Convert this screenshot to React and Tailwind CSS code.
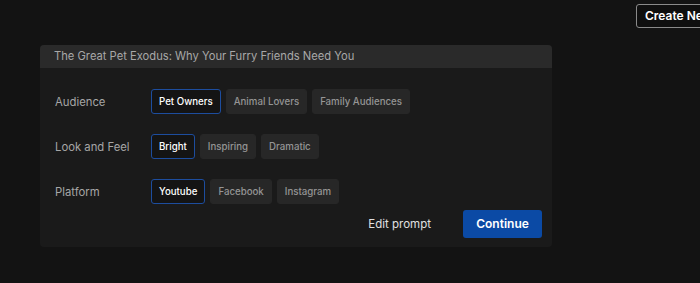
import { useState } from 'react';

const FONT = { fontFamily: 'Inter, "Noto Sans", sans-serif' };

const OPTIONS = [
  { label: 'Audience', items: ['Pet Owners', 'Animal Lovers', 'Family Audiences'] },
  { label: 'Look and Feel', items: ['Bright', 'Inspiring', 'Dramatic'] },
  { label: 'Platform', items: ['Youtube', 'Facebook', 'Instagram'] },
];

function Chip({ text, selected, onClick }) {
  return (
    <button
      onClick={onClick}
      className={`h-[25px] px-[7px] rounded-[3px] text-[9.7px] font-medium leading-none border ${
        selected
          ? 'bg-[#141414] border-[#1d4d9e] text-white'
          : 'bg-[#272727] border-[#272727] text-[#959595]'
      }`}
    >
      {text}
    </button>
  );
}

export default function App() {
  const [picked, setPicked] = useState({ Audience: 'Pet Owners', 'Look and Feel': 'Bright', Platform: 'Youtube' });

  return (
    <div className="w-[700px] h-[283px] bg-[#131313] overflow-hidden flex flex-col" style={FONT}>
      {/* Top bar */}
      <div className="flex pt-[4px] h-[45px]">
        <button className="shrink-0 h-[24px] ml-[636px] px-[8px] rounded-[3px] border border-[#8a8a8a] bg-[#0f0f0f] text-white text-[12px] font-semibold whitespace-nowrap">
          Create New
        </button>
      </div>

      {/* Card */}
      <div className="ml-[40px] w-[512px] rounded-[4px] bg-[#1a1a1a] overflow-hidden">
        <div className="h-[23px] bg-[#2a2a2a] px-[14px] flex items-center text-[11.2px] text-[#a8a8a8]">
          The Great Pet Exodus: Why Your Furry Friends Need You
        </div>
        <div className="pt-[21px] pb-[9px]">
          {OPTIONS.map(group => (
            <div key={group.label} className="flex items-center h-[25px] mb-[20px] last:mb-0">
              <div className="w-[111px] pl-[15px] pt-[1px] text-[11.3px] text-[#a6a6a6]">{group.label}</div>
              <div className="flex gap-[5px]">
                {group.items.map(item => (
                  <Chip
                    key={item}
                    text={item}
                    selected={picked[group.label] === item}
                    onClick={() => setPicked({ ...picked, [group.label]: item })}
                  />
                ))}
              </div>
            </div>
          ))}
          <div className="flex justify-end items-center pr-[10px] mt-[-14px]">
            <button className="text-[11.5px] text-[#e0e0e0] mr-[32px] mt-[1px]">Edit prompt</button>
            <button className="h-[28px] w-[79px] rounded-[3px] bg-[#0b4aa5] text-white text-[12px] font-semibold">
              Continue
            </button>
          </div>
        </div>
      </div>
    </div>
  );
}
